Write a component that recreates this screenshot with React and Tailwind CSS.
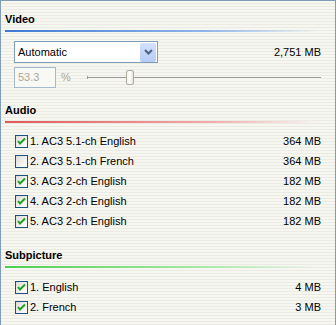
import React from "react";

const font = { fontFamily: '"Liberation Sans", Arial, sans-serif' };

const Check = ({ checked }) => (
  <span className="flex h-[13px] w-[13px] shrink-0 items-center justify-center border border-[#1c5180] bg-[linear-gradient(135deg,#dcdcd7,#ffffff)]">
    {checked && (
      <svg width="9" height="9" viewBox="0 0 9 9">
        <path d="M1 4 L3 6.5 L8 1.5" fill="none" stroke="#21a121" strokeWidth="2" />
      </svg>
    )}
  </span>
);

const Header = ({ title, line, className }) => (
  <div className={className}>
    <div className="h-[14px] text-[11px] leading-[14px] font-bold text-black">{title}</div>
    <div className={`mt-[4px] h-[2px] ${line}`} />
  </div>
);

const Row = ({ checked, label, size }) => (
  <div className="flex h-[20px] items-center pl-[10px] text-[11px] text-black">
    <Check checked={checked} />
    <span className="ml-[2px] flex-1">{label}</span>
    <span>{size}</span>
  </div>
);

const audio = [
  { checked: true, label: "1. AC3 5.1-ch English", size: "364 MB" },
  { checked: false, label: "2. AC3 5.1-ch French", size: "364 MB" },
  { checked: true, label: "3. AC3 2-ch English", size: "182 MB" },
  { checked: true, label: "4. AC3 2-ch English", size: "182 MB" },
  { checked: true, label: "5. AC3 2-ch English", size: "182 MB" },
];

const subs = [
  { checked: true, label: "1. English", size: "4 MB" },
  { checked: true, label: "2. French", size: "3 MB" },
];

export default function App() {
  return (
    <div
      style={font}
      className="h-[325px] w-[336px] overflow-hidden border-x border-t border-[#7f9db9] bg-[repeating-linear-gradient(to_bottom,#f7f7f2_0px,#f7f7f2_2px,#ebebe4_2px,#ebebe4_3px)] pl-[4px] pr-[14px]"
    >
      <Header
        title="Video"
        className="mt-[11px] mr-[-14px]"
        line="bg-[linear-gradient(to_right,#3f7ad3_0%,#8fb4ea_60%,rgba(255,255,255,0)_95%)]"
      />

      <div className="mt-[9px] flex items-center pl-[9px] text-[11px]">
        <div className="flex h-[22px] w-[144px] items-center border border-[#7f9db9] bg-white pl-[3px]">
          <span className="flex-1">Automatic</span>
          <span className="mr-[1px] flex h-[19px] w-[16px] items-center justify-center rounded-[2px] bg-[linear-gradient(to_bottom,#d4e1fc,#b6cbf6)]">
            <svg width="9" height="6" viewBox="0 0 9 6">
              <path d="M1 1 L4.5 4.5 L8 1" fill="none" stroke="#4d6185" strokeWidth="2" />
            </svg>
          </span>
        </div>
        <span className="ml-auto">2,751 MB</span>
      </div>

      <div className="mt-[4px] flex h-[21px] items-center pl-[9px] text-[11px] text-[#aca899]">
        <div className="flex h-[21px] w-[42px] items-center border border-[#a5b9d1] bg-[#f8f8f5] pl-[3px]">
          53.3
        </div>
        <span className="ml-[5px]">%</span>
        <div className="relative ml-[16px] h-[16px] flex-1">
          <div className="absolute top-[7px] left-0 right-0 h-[1px] bg-[#9d9c99]" />
          <div className="absolute top-[8px] left-0 right-0 h-[1px] bg-[#f3f3ee]" />
          <div className="absolute top-[6px] left-0 h-[3px] w-[1px] bg-[#9d9c99]" />
          <div className="absolute top-0 left-[39px] h-[15px] w-[8px] rounded-[2px] border border-[#b0ada0] bg-[linear-gradient(to_right,#f4f3ee,#ffffff,#e3e1d6)]" />
        </div>
      </div>

      <Header
        title="Audio"
        className="mt-[15px] mr-[-14px]"
        line="bg-[linear-gradient(to_right,#e05858_0%,#f0a8a8_60%,rgba(255,255,255,0)_95%)]"
      />
      <div className="mt-[8px]">
        {audio.map((a) => (
          <Row key={a.label} {...a} />
        ))}
      </div>

      <Header
        title="Subpicture"
        className="mt-[17px] mr-[-14px]"
        line="bg-[linear-gradient(to_right,#4fcf4f_0%,#a8e8a8_60%,rgba(255,255,255,0)_95%)]"
      />
      <div className="mt-[9px]">
        {subs.map((a) => (
          <Row key={a.label} {...a} />
        ))}
      </div>
    </div>
  );
}
